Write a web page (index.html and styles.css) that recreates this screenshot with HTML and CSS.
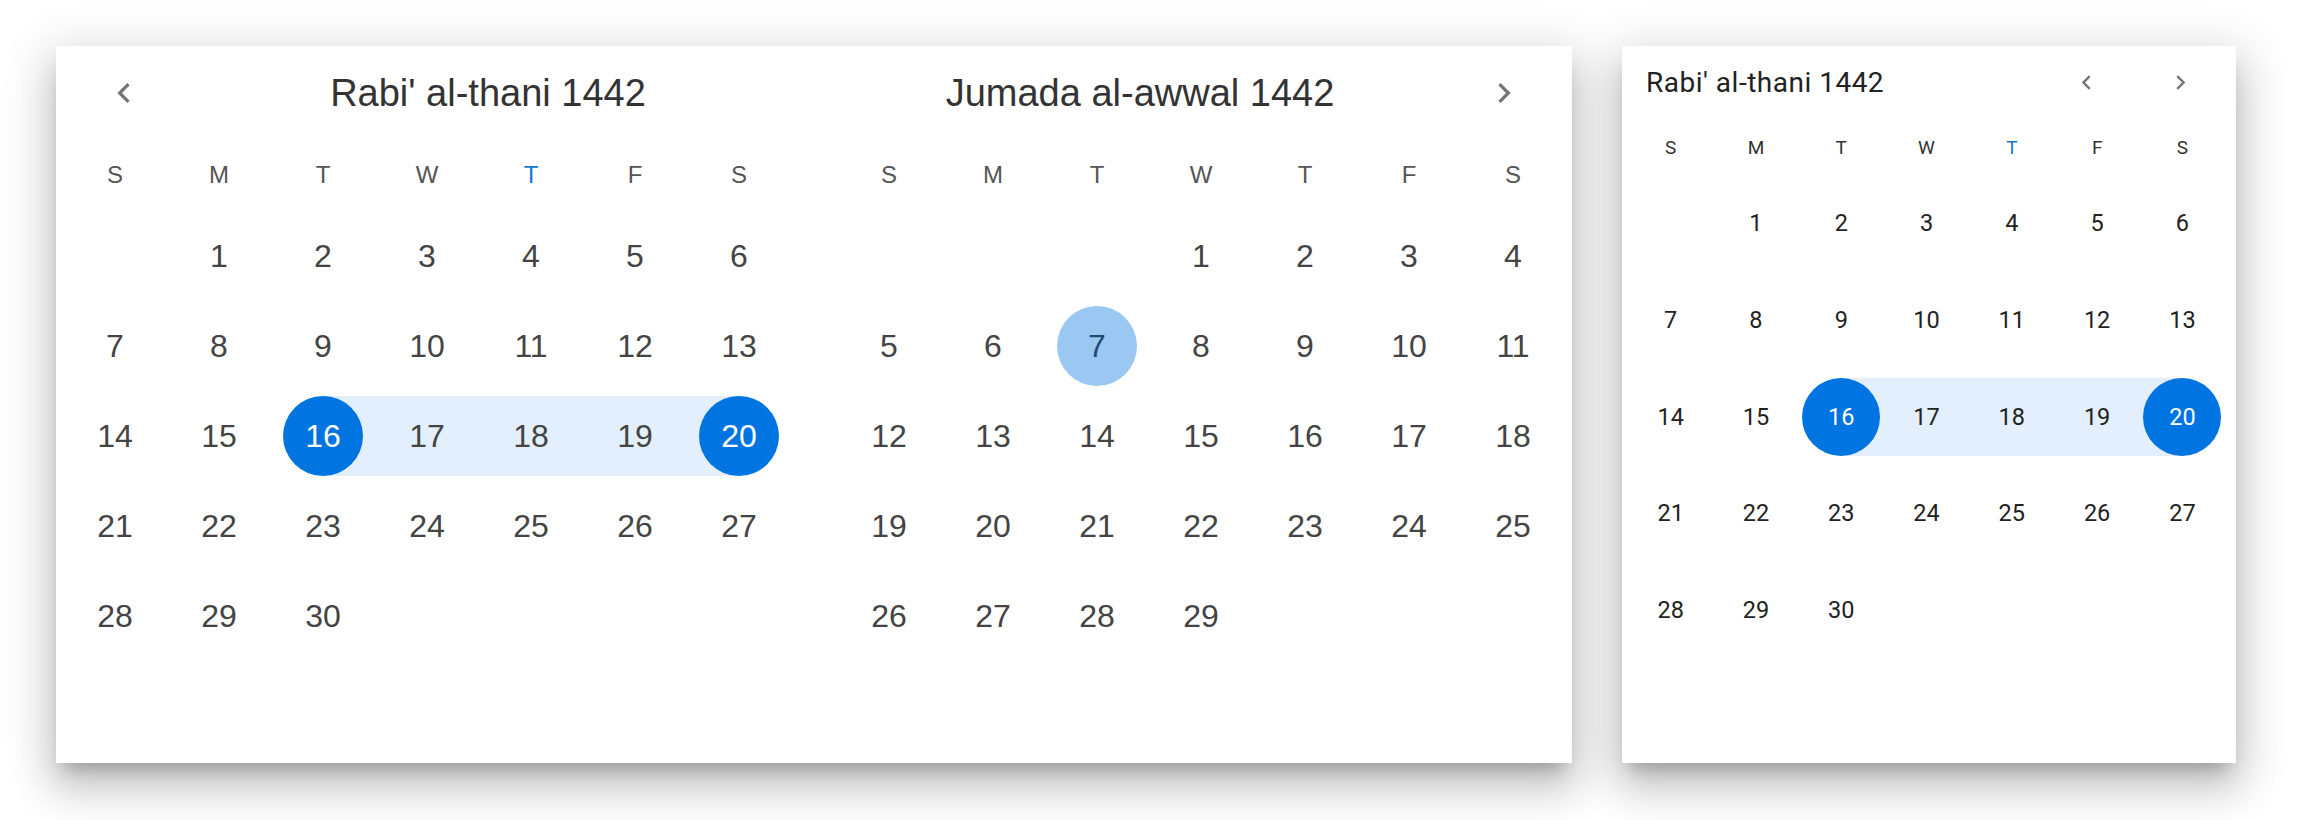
FILE: index.html
```html
<!DOCTYPE html>
<html lang="en">
<head>
    <meta charset="UTF-8">
    <meta name="viewport" content="width=device-width, initial-scale=1.0">
    <title>Hijri Date Range Picker</title>
    <link rel="stylesheet" href="styles.css">
</head>
<body>
    <div class="page">
        <!-- Desktop range picker: two months side by side -->
        <div class="card desktop">
            <div class="month">
                <div class="month-header">
                    <button class="nav-btn">
                        <svg viewBox="0 0 24 24"><path d="M15.41 7.41 14 6l-6 6 6 6 1.41-1.41L10.83 12z"/></svg>
                    </button>
                    <div class="month-title">Rabi' al-thani 1442</div>
                </div>
                <div class="weekdays">
                    <span>S</span><span>M</span><span>T</span><span>W</span><span class="today">T</span><span>F</span><span>S</span>
                </div>
                <div class="weeks">
                    <div class="week">
                        <div class="day"></div>
                        <div class="day"><span>1</span></div>
                        <div class="day"><span>2</span></div>
                        <div class="day"><span>3</span></div>
                        <div class="day"><span>4</span></div>
                        <div class="day"><span>5</span></div>
                        <div class="day"><span>6</span></div>
                    </div>
                    <div class="week">
                        <div class="day"><span>7</span></div>
                        <div class="day"><span>8</span></div>
                        <div class="day"><span>9</span></div>
                        <div class="day"><span>10</span></div>
                        <div class="day"><span>11</span></div>
                        <div class="day"><span>12</span></div>
                        <div class="day"><span>13</span></div>
                    </div>
                    <div class="week">
                        <div class="day"><span>14</span></div>
                        <div class="day"><span>15</span></div>
                        <div class="day range-start"><span class="selected">16</span></div>
                        <div class="day in-range"><span>17</span></div>
                        <div class="day in-range"><span>18</span></div>
                        <div class="day in-range"><span>19</span></div>
                        <div class="day range-end"><span class="selected">20</span></div>
                    </div>
                    <div class="week">
                        <div class="day"><span>21</span></div>
                        <div class="day"><span>22</span></div>
                        <div class="day"><span>23</span></div>
                        <div class="day"><span>24</span></div>
                        <div class="day"><span>25</span></div>
                        <div class="day"><span>26</span></div>
                        <div class="day"><span>27</span></div>
                    </div>
                    <div class="week">
                        <div class="day"><span>28</span></div>
                        <div class="day"><span>29</span></div>
                        <div class="day"><span>30</span></div>
                        <div class="day"></div>
                        <div class="day"></div>
                        <div class="day"></div>
                        <div class="day"></div>
                    </div>
                </div>
            </div>

            <div class="month">
                <div class="month-header">
                    <div class="month-title">Jumada al-awwal 1442</div>
                    <button class="nav-btn">
                        <svg viewBox="0 0 24 24"><path d="M10 6 8.59 7.41 13.17 12l-4.58 4.59L10 18l6-6z"/></svg>
                    </button>
                </div>
                <div class="weekdays">
                    <span>S</span><span>M</span><span>T</span><span>W</span><span>T</span><span>F</span><span>S</span>
                </div>
                <div class="weeks">
                    <div class="week">
                        <div class="day"></div>
                        <div class="day"></div>
                        <div class="day"></div>
                        <div class="day"><span>1</span></div>
                        <div class="day"><span>2</span></div>
                        <div class="day"><span>3</span></div>
                        <div class="day"><span>4</span></div>
                    </div>
                    <div class="week">
                        <div class="day"><span>5</span></div>
                        <div class="day"><span>6</span></div>
                        <div class="day"><span class="current">7</span></div>
                        <div class="day"><span>8</span></div>
                        <div class="day"><span>9</span></div>
                        <div class="day"><span>10</span></div>
                        <div class="day"><span>11</span></div>
                    </div>
                    <div class="week">
                        <div class="day"><span>12</span></div>
                        <div class="day"><span>13</span></div>
                        <div class="day"><span>14</span></div>
                        <div class="day"><span>15</span></div>
                        <div class="day"><span>16</span></div>
                        <div class="day"><span>17</span></div>
                        <div class="day"><span>18</span></div>
                    </div>
                    <div class="week">
                        <div class="day"><span>19</span></div>
                        <div class="day"><span>20</span></div>
                        <div class="day"><span>21</span></div>
                        <div class="day"><span>22</span></div>
                        <div class="day"><span>23</span></div>
                        <div class="day"><span>24</span></div>
                        <div class="day"><span>25</span></div>
                    </div>
                    <div class="week">
                        <div class="day"><span>26</span></div>
                        <div class="day"><span>27</span></div>
                        <div class="day"><span>28</span></div>
                        <div class="day"><span>29</span></div>
                        <div class="day"></div>
                        <div class="day"></div>
                        <div class="day"></div>
                    </div>
                </div>
            </div>
        </div>

        <!-- Static picker: one month -->
        <div class="card static">
            <div class="month-header">
                <div class="month-title">Rabi' al-thani 1442</div>
                <button class="nav-btn">
                    <svg viewBox="0 0 24 24"><path d="M15.41 7.41 14 6l-6 6 6 6 1.41-1.41L10.83 12z"/></svg>
                </button>
                <button class="nav-btn">
                    <svg viewBox="0 0 24 24"><path d="M10 6 8.59 7.41 13.17 12l-4.58 4.59L10 18l6-6z"/></svg>
                </button>
            </div>
            <div class="weekdays">
                <span>S</span><span>M</span><span>T</span><span>W</span><span class="today">T</span><span>F</span><span>S</span>
            </div>
            <div class="weeks">
                <div class="week">
                    <div class="day"></div>
                    <div class="day"><span>1</span></div>
                    <div class="day"><span>2</span></div>
                    <div class="day"><span>3</span></div>
                    <div class="day"><span>4</span></div>
                    <div class="day"><span>5</span></div>
                    <div class="day"><span>6</span></div>
                </div>
                <div class="week">
                    <div class="day"><span>7</span></div>
                    <div class="day"><span>8</span></div>
                    <div class="day"><span>9</span></div>
                    <div class="day"><span>10</span></div>
                    <div class="day"><span>11</span></div>
                    <div class="day"><span>12</span></div>
                    <div class="day"><span>13</span></div>
                </div>
                <div class="week">
                    <div class="day"><span>14</span></div>
                    <div class="day"><span>15</span></div>
                    <div class="day range-start"><span class="selected">16</span></div>
                    <div class="day in-range"><span>17</span></div>
                    <div class="day in-range"><span>18</span></div>
                    <div class="day in-range"><span>19</span></div>
                    <div class="day range-end"><span class="selected">20</span></div>
                </div>
                <div class="week">
                    <div class="day"><span>21</span></div>
                    <div class="day"><span>22</span></div>
                    <div class="day"><span>23</span></div>
                    <div class="day"><span>24</span></div>
                    <div class="day"><span>25</span></div>
                    <div class="day"><span>26</span></div>
                    <div class="day"><span>27</span></div>
                </div>
                <div class="week">
                    <div class="day"><span>28</span></div>
                    <div class="day"><span>29</span></div>
                    <div class="day"><span>30</span></div>
                    <div class="day"></div>
                    <div class="day"></div>
                    <div class="day"></div>
                    <div class="day"></div>
                </div>
            </div>
        </div>
    </div>
</body>
</html>
```

FILE: styles.css
```css
/* Hijri date range pickers */
body {
    margin: 0;
    background: #fff;
    color: #333;
}

.page {
    display: flex;
    align-items: flex-start;
    gap: 50px;
    min-height: 820px;
    padding: 46px 0 0 56px;
    box-sizing: border-box;
}

.card {
    background: #fff;
    box-shadow: 0 14px 16px -8px rgba(0, 0, 0, 0.22),
                0 24px 38px 3px rgba(0, 0, 0, 0.15),
                0 10px 48px 9px rgba(0, 0, 0, 0.12);
}

button.nav-btn {
    border: none;
    background: none;
    padding: 0;
    margin: 0;
    display: flex;
    align-items: center;
    justify-content: center;
    cursor: pointer;
}

.nav-btn svg {
    fill: #757575;
}

.weekdays,
.week {
    display: grid;
}

.weekdays span {
    display: flex;
    align-items: center;
    justify-content: center;
}

.weekdays .today {
    color: #1976d2;
}

.weeks {
    display: flex;
    flex-direction: column;
}

.day {
    display: flex;
    align-items: center;
    justify-content: center;
}

.day span {
    display: flex;
    align-items: center;
    justify-content: center;
    border-radius: 50%;
}

.day.in-range {
    background: #e3effc;
}

.day.range-start {
    background: linear-gradient(to right, transparent 50%, #e3effc 50%);
}

.day.range-end {
    background: linear-gradient(to right, #e3effc 50%, transparent 50%);
}

.day .selected {
    background: #0074e0;
    color: #fff;
}

.day .current {
    background: #9bc7f3;
    color: #1f4a75;
}

/* ---- desktop (two months) ---- */
.desktop {
    display: flex;
    gap: 46px;
    width: 1516px;
    padding: 15px 7px 17px;
    box-sizing: border-box;
    font-family: "Liberation Sans", Arial, sans-serif;
}

.desktop .month {
    width: 728px;
}

.desktop .month-header {
    display: flex;
    align-items: center;
    height: 64px;
}

.desktop .nav-btn {
    width: 122px;
    height: 64px;
}

.desktop .nav-btn svg {
    width: 40px;
    height: 40px;
}

.desktop .month-title {
    flex: 1;
    text-align: center;
    font-size: 38px;
    color: #333;
}

.desktop .weekdays {
    grid-template-columns: repeat(7, 104px);
    height: 50px;
    margin-top: 25px;
    font-size: 24px;
    color: #555;
}

.desktop .weeks {
    gap: 10px;
    margin-top: 16px;
    min-height: 530px;
}

.desktop .week {
    grid-template-columns: repeat(7, 104px);
    height: 80px;
}

.desktop .day {
    height: 80px;
    font-size: 32px;
    color: #444;
}

.desktop .day .selected {
    color: #fff;
}

.desktop .day span {
    width: 80px;
    height: 80px;
}

/* ---- static (one month) ---- */
.static {
    width: 614px;
    height: 717px;
    padding: 12px 6px 17px;
    box-sizing: border-box;
    font-family: Roboto, "Noto Sans", sans-serif;
}

.static .month-header {
    display: flex;
    align-items: center;
    height: 48px;
    padding: 0 26px 0 18px;
    gap: 46px;
}

.static .month-title {
    flex: 1;
    font-size: 28px;
    letter-spacing: 0.5px;
    color: #222;
}

.static .nav-btn {
    width: 48px;
    height: 48px;
}

.static .nav-btn svg {
    width: 29px;
    height: 29px;
}

.static .weekdays {
    grid-template-columns: repeat(7, 85.3px);
    height: 40px;
    margin-top: 21px;
    font-size: 19px;
    color: #333;
}

.static .weeks {
    gap: 18.8px;
    margin-top: 17px;
    min-height: 562px;
}

.static .week {
    grid-template-columns: repeat(7, 85.3px);
    height: 78px;
}

.static .day {
    height: 78px;
    font-size: 23.5px;
    color: #222;
}

.static .day span {
    width: 78px;
    height: 78px;
}
```
